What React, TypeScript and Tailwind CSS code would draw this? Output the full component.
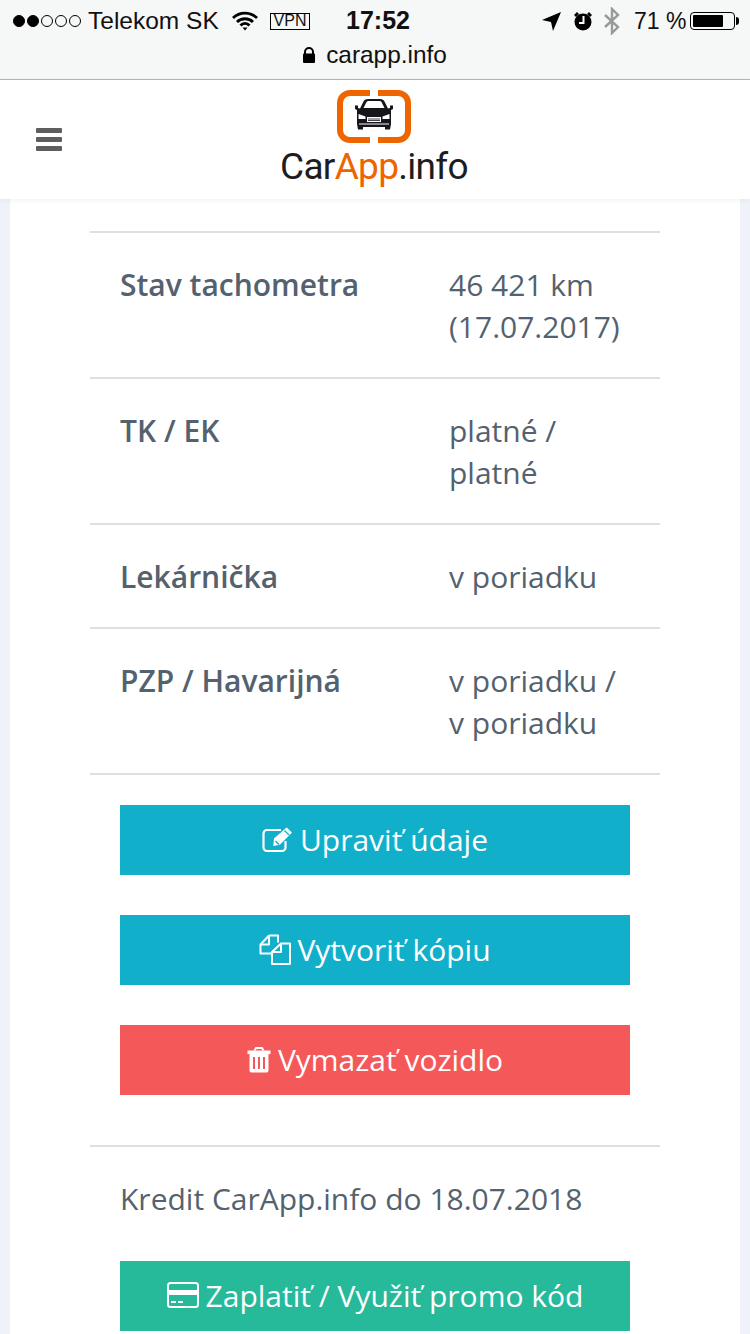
import React from "react";

const Row = ({ label, value }: { label: string; value: string[] }) => (
  <div className="flex border-b-2 border-[#dfdfdf] pb-[29px] pl-[30px] pt-[31px] text-[30px] leading-[42px] text-[#54616e]">
    <div className="w-[329px] shrink-0 font-semibold">{label}</div>
    <div>
      {value.map((v) => (
        <div key={v}>{v}</div>
      ))}
    </div>
  </div>
);

const Btn = ({ color, icon, text, className = "" }: { color: string; icon: React.ReactNode; text: string; className?: string }) => (
  <div className={`mx-[30px] flex h-[70px] items-center justify-center gap-[7px] pb-[2px] text-[30px] text-white ${color} ${className}`}>
    {icon}
    <span>{text}</span>
  </div>
);

const Edit = () => (
  <svg width="31" height="26" viewBox="0 0 31 26" fill="none" className="mt-[1px]">
    <path d="M19 3H5a3.500 3.500 0 0 0-3.500 3.500v14A3.500 3.500 0 0 0 5 24h15a3.500 3.500 0 0 0 3.500-3.500V14" stroke="#fff" strokeWidth="2.200" />
    <path d="M12 11.500 24 1l.8-.500 5 5-.5.800-11.500 11.500-6.500 1.200z" fill="#fff" />
    <path d="M13.500 14l3.500 3.500" stroke="#12afcb" strokeWidth="1.500" />
    <path d="M22.500 3.500l4.500 4.500" stroke="#12afcb" strokeWidth="1.300" />
  </svg>
);
const Copy = () => (
  <svg width="32" height="31" viewBox="0 0 32 31" fill="none" stroke="#fff" strokeWidth="2" strokeLinejoin="round" className="mr-[-1px]">
    <path d="M10 1.500h9v7M10 1.500 1.500 10.500v9H12" />
    <path d="M10 1.500v9H1.500" />
    <path d="M22 9.500h9v20.500H13V18z" />
    <path d="M22 9.500V18h-9" />
  </svg>
);
const Trash = () => (
  <svg width="24" height="27" viewBox="0 0 24 27" fill="#fff">
    <path d="M7.500 4.500 9 2h6l1.500 2.500" fill="none" stroke="#fff" strokeWidth="2" />
    <path d="M0.500 4.500h23V8H.5z" />
    <path d="M2.500 8h19v16.500a2 2 0 0 1-2 2h-15a2 2 0 0 1-2-2z" />
    <path d="M7 11v12M12 11v12M17 11v12" stroke="#f55858" strokeWidth="2" />
  </svg>
);
const Card = () => (
  <svg width="32" height="26" viewBox="0 0 32 26" fill="none">
    <rect x="1" y="1" width="30" height="24" rx="2.500" stroke="#fff" strokeWidth="2" />
    <path d="M1 8h30v5H1z" fill="#fff" />
    <path d="M4 20h5M11 20h5" stroke="#fff" strokeWidth="2" />
  </svg>
);

const Logo = () => (
  <div className="flex flex-col items-center">
    <svg width="74" height="53" viewBox="0 0 74 53" className="block">
      <path d="M33 3H13A10 10 0 0 0 3 13v27a10 10 0 0 0 10 10h20" fill="none" stroke="#ee6500" strokeWidth="6" />
      <path d="M41 3h20a10 10 0 0 1 10 10v27a10 10 0 0 1-10 10H41" fill="none" stroke="#ee6500" strokeWidth="6" />
      <path d="M23 19.500l3.500-7Q27.500 10 31 10h12q3.500 0 4.500 2.500l3.500 7 2-.5v-2.500h3V20l-2 1v14l-1 5.500h-5V38H26v2.500h-5L20 35V21l-2-1v-3.500h3V19z" fill="#15151a" transform="translate(0 -1)" />
      <path d="M26.500 18l3-6q.5-1 2-1h11q1.500 0 2 1l3 6z" fill="#fff" />
      <path d="M21.500 24l7 2.500V29h-7zM52.500 24l-7 2.500V29h7z" fill="#fff" />
      <path d="M30 27h14v5H30z" fill="#fff" />
      <path d="M31 29h12M31 30.500h12" stroke="#15151a" strokeWidth="0.800" />
      <path d="M22 34h30" stroke="#fff" strokeWidth="1" />
    </svg>
    <div className="mt-[5px] whitespace-nowrap font-['Roboto',sans-serif] text-[37px] font-normal leading-[38px] tracking-[-0.7px] text-[#1d1d1f]">
      Car<span className="text-[#ee6500]">App</span>.info
    </div>
  </div>
);

export default function App() {
  return (
    <div className="h-[1334px] w-[750px] overflow-hidden bg-[#eff3f9] font-['Open_Sans',sans-serif]">
      <div className="h-[80px] border-b border-[#b5b5b5] bg-[#f6f7f7] font-['Liberation_Sans',sans-serif] text-[#111]">
        <div className="flex h-[42px] items-center pl-[13px] text-[24.5px]">
          <div className="flex items-center gap-[2px]">
            {[1, 1, 0, 0, 0].map((f, i) => (
              <span key={i} className={`h-[12px] w-[12px] rounded-full border border-black ${f ? "bg-black" : ""}`} />
            ))}
          </div>
          <span className="ml-[7px] w-[144px] whitespace-nowrap">Telekom SK</span>
          <svg width="26" height="20" viewBox="0 0 26 20" fill="none" stroke="#000" strokeWidth="2.800">
            <path d="M1 7a17 17 0 0 1 24 0M5 11a11.500 11.500 0 0 1 16 0M8.500 14.500a6 6 0 0 1 9 0" />
            <path d="M10.500 16.500h5L13 19.500z" fill="#000" stroke="none" />
          </svg>
          <span className="ml-[12px] flex h-[17px] w-[40px] items-center justify-center border border-black text-[16px]">VPN</span>
          <span className="ml-[36px] w-[196px] text-[25px] font-bold">17:52</span>
          <svg width="19" height="19" viewBox="0 0 19 19">
            <path d="M19 0 11 19 9 10 0 8z" fill="#000" />
          </svg>
          <svg width="20" height="20" viewBox="0 0 20 20" className="ml-[12px]">
            <path d="M1 4 4 1l2 2-3 3zM19 4l-3-3-2 2 3 3z" fill="#000" />
            <circle cx="10" cy="11" r="8.500" fill="#000" />
            <path d="M10.500 5v7H6" stroke="#fff" strokeWidth="2" fill="none" />
          </svg>
          <svg width="16" height="28" viewBox="0 0 16 28" className="ml-[11px]" fill="none" stroke="#999" strokeWidth="2.400">
            <path d="M1 8l13 12-6 6V2l6 6L1 20" />
          </svg>
          <span className="ml-[14px] w-[56px] whitespace-nowrap text-[23px]">71 %</span>
          <span className="flex h-[18px] w-[45px] items-center rounded-[4px] border border-black p-[2px]">
            <span className="h-full w-[30px] rounded-[1px] bg-black" />
          </span>
          <span className="ml-[1px] h-[8px] w-[3px] rounded-r-[3px] bg-black" />
        </div>
        <div className="mt-[2px] flex h-[22px] items-center justify-center gap-[11px] text-[24.4px]">
          <svg width="12" height="16" viewBox="0 0 12 16">
            <path d="M2 7V5a4 4 0 0 1 8 0v2" fill="none" stroke="#000" strokeWidth="2" />
            <rect x="0" y="6.500" width="12" height="9.500" rx="1" fill="#000" />
          </svg>
          <span>carapp.info</span>
        </div>
      </div>

      <div className="relative z-10 flex h-[119px] items-center bg-white pl-[36px] pr-[36px] shadow-[0_1px_6px_rgba(0,0,0,0.06)]">
        <div className="flex w-[26px] flex-col gap-[4px]">
          <span className="h-[5px] rounded-[1px] bg-[#5e5e5e]" />
          <span className="h-[5px] rounded-[1px] bg-[#5e5e5e]" />
          <span className="h-[5px] rounded-[1px] bg-[#5e5e5e]" />
        </div>
        <div className="ml-[218px] mt-[-3px]">
          <Logo />
        </div>
      </div>

      <div className="mx-[10px] h-[1135px] bg-white pt-[32px]">
        <div className="mx-[80px]">
          <div className="border-t-2 border-[#dfdfdf]">
            <Row label="Stav tachometra" value={["46 421 km", "(17.07.2017)"]} />
            <Row label="TK / EK" value={["platné /", "platné"]} />
            <Row label="Lekárnička" value={["v poriadku"]} />
            <Row label="PZP / Havarijná" value={["v poriadku /", "v poriadku"]} />
          </div>
          <div className="flex flex-col gap-[40px] pt-[30px]">
            <Btn color="bg-[#12afcb]" icon={<Edit />} text="Upraviť údaje" />
            <Btn color="bg-[#12afcb]" icon={<Copy />} text="Vytvoriť kópiu" />
            <Btn color="bg-[#f55858]" icon={<Trash />} text="Vymazať vozidlo" />
          </div>
          <div className="mt-[50px] border-t-2 border-[#dfdfdf] pb-[29px] pl-[30px] pt-[31px] text-[30px] leading-[42px] text-[#54616e]">
            Kredit CarApp.info do 18.07.2018
          </div>
          <Btn color="bg-[#26b99a]" icon={<Card />} text="Zaplatiť / Využiť promo kód" className="mt-[12px]" />
        </div>
      </div>
    </div>
  );
}
